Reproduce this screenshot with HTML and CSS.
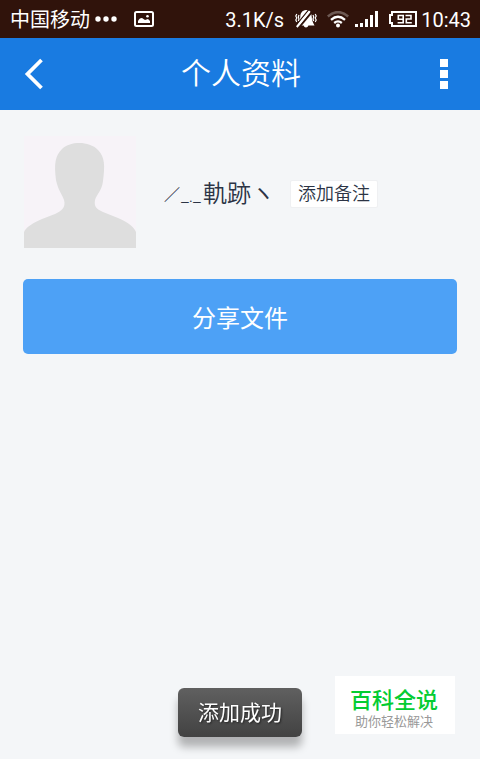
FILE: index.html
```html
<!DOCTYPE html>
<html lang="zh-CN">
<head>
<meta charset="utf-8">
<meta name="viewport" content="width=device-width, initial-scale=1">
<title>个人资料</title>
<link rel="stylesheet" href="styles.css">
</head>
<body>
<div class="status">
  <span class="carrier">中国移动</span>
  <svg class="dots" width="22" height="6" viewBox="0 0 22 6" fill="#fff" aria-hidden="true"><circle cx="3" cy="3" r="2.7"/><circle cx="11" cy="3" r="2.7"/><circle cx="19" cy="3" r="2.7"/></svg>
  <svg class="photo" width="20" height="16" viewBox="0 0 20 16" aria-hidden="true"><rect x="1" y="1" width="18" height="14" rx="1.5" fill="none" stroke="#fff" stroke-width="2"/><path d="M4 12V10C5 8 6 7 8 7L11 9 14 8 16 10V12Z" fill="#fff"/><circle cx="13.5" cy="5.3" r="1.3" fill="#fff"/></svg>
  <span class="latin speed">3.1K/s</span>
  <svg class="bell" width="22" height="18" viewBox="0 0 22 18" aria-hidden="true"><path d="M11 0C15 .5 16.5 3 16.7 6.5 17 10 17.5 12 19.5 15.5H13.4C12.7 18 9.3 18 8.6 15.5H2.5C4.5 12 5 10 5.3 6.5 5.5 3 7 .5 11 0Z" fill="#fff"/><path d="M3.5 18 16.8 2" stroke="#30130b" stroke-width="2"/><path d="M.5 16 13.5 0" stroke="#30130b" stroke-width="1.2"/><path d="M1.8 17 14.8 1.2" stroke="#fff" stroke-width="2"/><path d="M1.8 4 .8 6 1.8 8 .8 10 1.8 12M4 5 3.3 7 4 9 3.3 11M20.2 4 21.2 6 20.2 8 21.2 10 20.2 12M18 5 18.7 7 18 9 18.7 11" fill="none" stroke="#fff" stroke-width="1.2"/></svg>
  <svg class="wifi" width="22" height="17" viewBox="0 0 22 17" fill="none" aria-hidden="true"><path d="M.8 5.5Q11-3.2 21.2 5.5" stroke="#6e5a54" stroke-width="2.6"/><path d="M4 8.8Q11 2.8 18 8.8M7.2 12Q11 8.8 14.8 12" stroke="#fff" stroke-width="2.3"/><circle cx="11" cy="14.6" r="2" fill="#fff"/></svg>
  <svg class="signal" width="23" height="16" viewBox="0 0 23 16" fill="#fff" aria-hidden="true"><path d="M0 13H3V16H0ZM5 12H8V16H5ZM10 8H13V16H10ZM15 4H18V16H15ZM20 0H23V16H20Z"/></svg>
  <svg class="battery" width="28" height="16" viewBox="0 0 28 16" fill="none" stroke="#fff" aria-hidden="true"><path d="M3 1H27V15H3V12H1V4H3Z" stroke-width="2"/><path d="M14.2 8.2H9.3V4.5H14.2V11.7H8.6M16.5 4.5H22V8H17.3V11.7H22.8" stroke-width="1.6"/></svg>
  <span class="latin">10:43</span>
</div>
<header class="bar">
  <button class="back" aria-label="返回"><svg width="20" height="32" viewBox="0 0 20 32" fill="none" stroke="#fff" stroke-width="3.8"><path d="M17.5 2 3.5 16 17.5 30"/></svg></button>
  <h1>个人资料</h1>
  <button class="more" aria-label="更多"><svg width="8" height="30" viewBox="0 0 8 30" fill="#fff"><path d="M0 0H8V8H0ZM0 11H8V19H0ZM0 22H8V30H0Z"/></svg></button>
</header>
<main>
  <section class="profile">
    <svg class="avatar" width="112" height="112" viewBox="0 0 112 112" role="img" aria-label="头像"><rect width="112" height="112" fill="#f7f3f8"/><path d="M0 112V96C2 91 9 87 18 83L31 78C38 75 42 71 40 64 38 58 34 54 32 44 30 28 31 20 38 13 47 5 65 5 74 14 81 21 81 30 79 45 78 54 73 58 71 64 70 70 72 73 79 76L94 82C105 87 110 91 112 96V112Z" fill="#dedede"/></svg>
    <span class="name"><span class="stroke">／</span><span class="line">_._</span><span>軌跡ヽ</span></span>
    <button class="tag">添加备注</button>
  </section>
  <button class="share">分享文件</button>
</main>
<div class="toast" role="status">添加成功</div>
<aside class="mark"><strong>百科全说</strong><span>助你轻松解决</span></aside>
</body>
</html>
```
FILE: styles.css
```css
* { box-sizing: border-box; }
body {
  margin: 0;
  min-height: 100vh;
  background: #f4f6f8;
  font-family: Roboto, "Noto Sans CJK SC", sans-serif;
}
button { font: inherit; border: 0; padding: 0; background: none; }
svg { display: block; flex: none; }
.status {
  display: flex;
  align-items: center;
  height: 38px;
  padding: 0 9px 0 10px;
  background: #30130b;
  color: #fff;
  font-size: 20px;
  line-height: 24px;
}
.carrier, .latin { padding-top: 2px; }
.dots { margin-left: 5px; }
.photo { margin-left: 17px; }
.speed { margin-left: auto; }
.bell { margin-left: 11px; }
.wifi { margin-left: 10px; }
.signal { margin-left: 6px; }
.battery { margin: 0 4px 0 11px; }
.bar {
  display: flex;
  align-items: center;
  justify-content: space-between;
  height: 72px;
  padding: 0 24px;
  background: #197be1;
  color: #fff;
}
.bar h1 { margin: 0; font-size: 30px; line-height: 40px; font-weight: 350; }
.back, .more { display: flex; width: 28px; }
.more { justify-content: center; margin-right: -2px; }
main { padding: 26px 23px; }
.profile { display: flex; align-items: center; padding-left: 1px; }
.name {
  display: flex;
  align-items: baseline;
  margin: 6px 0 0 28px;
  color: #2c3445;
  font-size: 24px;
  line-height: 32px;
  font-weight: 350;
  font-family: Roboto, "Noto Sans CJK TC", sans-serif;
}
.stroke { align-self: center; font-size: 16px; font-weight: 700; }
.line { margin: 0 2px 0 1px; font-size: 18px; }
.tag {
  margin: 4px 0 0 15px;
  height: 28px;
  padding: 0 7px;
  border: 1px solid #eff0f2;
  border-radius: 2px;
  background: #fff;
  color: #2c3445;
  font-size: 18px;
  line-height: 26px;
  font-weight: 350;
}
.share {
  display: block;
  width: 100%;
  height: 75px;
  margin-top: 31px;
  border-radius: 5px;
  background: #4da1f6;
  color: #fff;
  font-size: 24px;
}
.toast {
  position: fixed;
  left: 50%;
  bottom: 22px;
  transform: translateX(-50%);
  padding: 10px 20px 9px;
  border-radius: 6px;
  background: linear-gradient(#606060, #424242);
  box-shadow: 0 10px 8px rgba(0, 0, 0, .28);
  color: #fff;
  font-size: 21px;
  line-height: 30px;
  text-shadow: 1px 1px 2px #222;
  white-space: nowrap;
}
.mark {
  position: fixed;
  right: 25px;
  bottom: 25px;
  display: flex;
  flex-direction: column;
  align-items: center;
  width: 120px;
  padding: 11px 2px 4px 0;
  background: #fff;
}
.mark strong { color: #05cc32; font-size: 22px; line-height: 27px; font-weight: 500; }
.mark span { color: #999; font-size: 13px; line-height: 16px; }
```
